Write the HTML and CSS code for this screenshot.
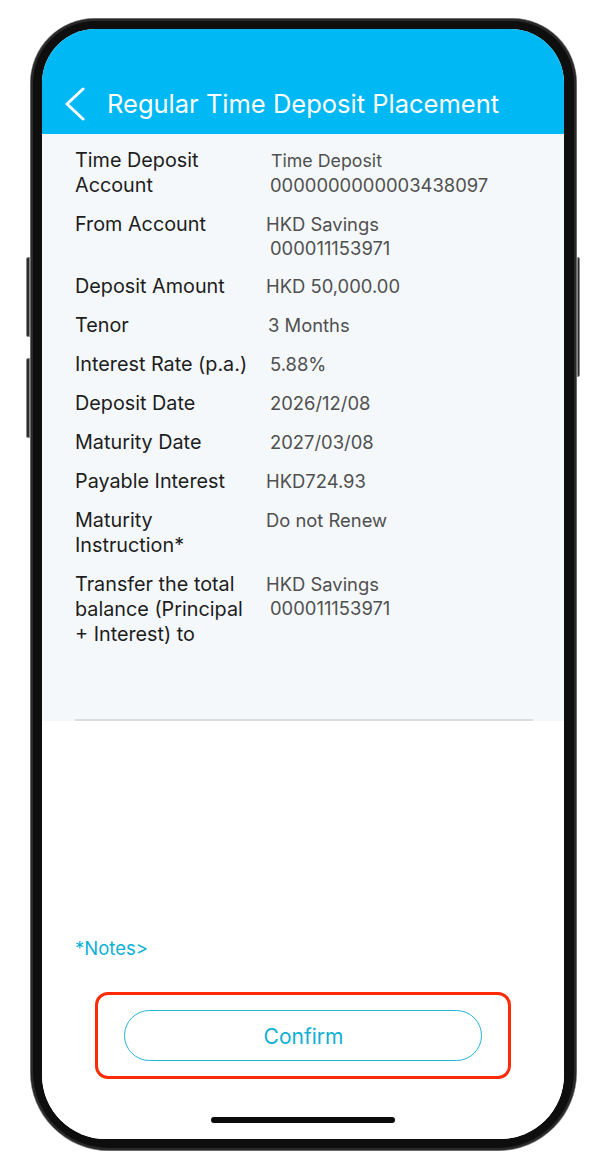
FILE: index.html
```html
<!DOCTYPE html>
<html lang="en">
<head>
<meta charset="utf-8">
<title>Regular Time Deposit Placement</title>
<link rel="stylesheet" href="styles.css">
</head>
<body>
<div class="phone">
  <span class="side-btn side-l1"></span>
  <span class="side-btn side-l2"></span>
  <span class="side-btn side-r1"></span>
  <div class="screen">
    <header class="nav">
      <svg class="back" width="22" height="34" viewBox="0 0 22 34" aria-hidden="true">
        <polyline points="19,2 3,17 19,32" fill="none" stroke="#ffffff" stroke-width="3" stroke-linecap="round" stroke-linejoin="round"/>
      </svg>
      <h1 class="title">Regular Time Deposit Placement</h1>
    </header>

    <section class="details">
      <dl class="grid">
        <dt class="label">Time Deposit<br>Account</dt>
        <dd class="value"><span class="v-sm off5">Time Deposit</span><br><span class="off4">0000000000003438097</span></dd>

        <dt class="label">From Account</dt>
        <dd class="value">HKD Savings<br><span class="off4">000011153971</span></dd>

        <dt class="label">Deposit Amount</dt>
        <dd class="value">HKD 50,000.00</dd>

        <dt class="label">Tenor</dt>
        <dd class="value"><span class="off2">3 Months</span></dd>

        <dt class="label">Interest Rate (p.a.)</dt>
        <dd class="value"><span class="off4">5.88%</span></dd>

        <dt class="label">Deposit Date</dt>
        <dd class="value"><span class="off4">2026/12/08</span></dd>

        <dt class="label">Maturity Date</dt>
        <dd class="value"><span class="off4">2027/03/08</span></dd>

        <dt class="label">Payable Interest</dt>
        <dd class="value">HKD724.93</dd>

        <dt class="label">Maturity<br>Instruction*</dt>
        <dd class="value">Do not Renew</dd>

        <dt class="label">Transfer the total<br>balance (Principal<br>+ Interest) to</dt>
        <dd class="value">HKD Savings<br><span class="off4">000011153971</span></dd>
      </dl>
      <div class="divider"></div>
    </section>

    <div class="bottom">
      <a class="notes" href="#">*Notes&gt;</a>
      <div class="highlight">
        <button class="confirm" type="button">Confirm</button>
      </div>
      <div class="home-bar"></div>
    </div>
  </div>
</div>
</body>
</html>
```

FILE: styles.css
```css
* {
  box-sizing: border-box;
}

html, body {
  margin: 0;
  padding: 0;
  background: #ffffff;
}

body {
  font-family: Inter, "Liberation Sans", Arial, sans-serif;
  width: 598px;
  height: 1170px;
  overflow: hidden;
}

.phone {
  position: relative;
  margin: 19px 0 0 31px;
  width: 545px;
  height: 1131px;
  padding: 10px 12px 11px 11px;
  background: #0e0e0e;
  border-radius: 64px 64px 78px 78px;
  box-shadow: 0 0 0 1px #6a6a6a, inset 0 0 0 2px #2a2a2a;
}

.side-btn {
  position: absolute;
  width: 4px;
  background: #2b2b2b;
  border: 1px solid #8a8a8a;
}

.side-l1 {
  left: -5px;
  top: 238px;
  height: 80px;
  border-radius: 2px 0 0 2px;
}

.side-l2 {
  left: -5px;
  top: 339px;
  height: 80px;
  border-radius: 2px 0 0 2px;
}

.side-r1 {
  right: -4px;
  top: 238px;
  height: 120px;
  width: 3px;
  border-radius: 0 2px 2px 0;
}

.screen {
  width: 100%;
  height: 100%;
  background: #ffffff;
  border-radius: 54px 54px 64px 64px;
  overflow: hidden;
  display: flex;
  flex-direction: column;
}

.nav {
  height: 105px;
  flex: none;
  background: #00b8f4;
  display: flex;
  align-items: center;
  padding: 44px 0 0 22px;
}

.back {
  display: block;
  flex: none;
}

.title {
  margin: 0 0 0 21px;
  font-size: 25.5px;
  font-weight: 400;
  color: #ffffff;
  letter-spacing: 0;
  white-space: nowrap;
}

.details {
  background: #f4f8fb;
  padding: 14px 0 0 0;
  flex: none;
}

.grid {
  margin: 0;
  padding: 0 31px 0 33px;
  display: grid;
  grid-template-columns: 191px 1fr;
  row-gap: 14px;
}

.label {
  margin: 0;
  font-size: 19.8px;
  line-height: 25px;
  color: #1d1d1d;
}

.value {
  margin: 0;
  font-size: 18.4px;
  line-height: 24px;
  color: #505050;
}

.v-sm {
  font-size: 17.8px;
}

.off2 {
  margin-left: 2px;
}

.off4 {
  margin-left: 4px;
}

.off5 {
  margin-left: 5px;
}

.divider {
  margin: 72px 31px 0 33px;
  height: 2px;
  background: #d9dde0;
}

.bottom {
  flex: 1;
  display: flex;
  flex-direction: column;
  background: #ffffff;
}

.notes {
  margin: 216px 0 0 33px;
  font-size: 18.5px;
  line-height: 22px;
  color: #0cb0d6;
  text-decoration: none;
  align-self: flex-start;
}

.highlight {
  margin: 33px auto 0 auto;
  width: 416px;
  height: 87px;
  border: 3px solid #ff2b06;
  border-radius: 13px;
  padding: 15px 26px;
}

.confirm {
  display: block;
  width: 100%;
  height: 51px;
  border: 1.5px solid #22b4d8;
  border-radius: 26px;
  background: #ffffff;
  font-family: Inter, "Liberation Sans", Arial, sans-serif;
  font-size: 21px;
  color: #0eafd4;
  padding: 3px 0 0 1px;
  line-height: 46px;
}

.home-bar {
  margin: 38px auto 0 auto;
  width: 184px;
  height: 6px;
  border-radius: 3px;
  background: #0a0a0a;
}
```
